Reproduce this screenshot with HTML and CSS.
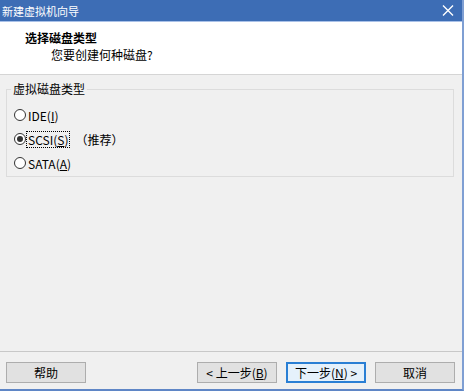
FILE: index.html
```html
<!doctype html>
<html lang="zh-CN">
  <head>
    <meta charset="UTF-8" />
    <title>新建虚拟机向导</title>
    <link rel="stylesheet" href="styles.css">
  </head>
  <body>
    <div class="window">
      <div class="titlebar">
        <span class="title">新建虚拟机向导</span>
        <svg class="close" width="12" height="11" viewBox="0 0 12 11">
          <path d="M1 0.5 L11 10.5 M11 0.5 L1 10.5" stroke="#fff" stroke-width="1.4" fill="none" />
        </svg>
      </div>

      <div class="header">
        <div class="header-title">选择磁盘类型</div>
        <div class="header-sub">您要创建何种磁盘?</div>
      </div>

      <div class="content">
        <fieldset class="group">
          <legend>虚拟磁盘类型</legend>
          <div class="radio-row">
            <span class="radio"></span>
            <span class="label">IDE(<u>I</u>)</span>
          </div>
          <div class="radio-row">
            <span class="radio checked"></span>
            <span class="label focused">SCSI(<u>S</u>)</span>
            <span class="hint">（推荐）</span>
          </div>
          <div class="radio-row">
            <span class="radio"></span>
            <span class="label">SATA(<u>A</u>)</span>
          </div>
        </fieldset>
      </div>

      <div class="footer">
        <button class="btn">帮助</button>
        <div class="spacer"></div>
        <button class="btn">&lt; 上一步(<u>B</u>)</button>
        <button class="btn default">下一步(<u>N</u>) &gt;</button>
        <button class="btn">取消</button>
      </div>
    </div>
  </body>
</html>
```

FILE: styles.css
```css
body {
  margin: 0;
  font-family: "Noto Sans CJK SC", "Noto Sans", sans-serif;
  font-size: 12px;
  color: #000;
  background-color: #f0f0f0;
}

.window {
  width: 462px;
  height: 389px;
  display: flex;
  flex-direction: column;
  background-color: #f0f0f0;
  border-right: 2px solid #7f9fd3;
  border-bottom: 2px solid #5f86c6;
}

.titlebar {
  height: 21px;
  flex-shrink: 0;
  display: flex;
  align-items: center;
  justify-content: space-between;
  padding: 0 8px 0 2px;
  background-color: #3d6db5;
  border-bottom: 1px solid #a9c1e8;
}

.title {
  color: #fff;
  font-size: 11px;
  line-height: 14px;
}

.close {
  display: block;
}

.header {
  height: 53px;
  flex-shrink: 0;
  box-sizing: border-box;
  padding: 8px 0 0 25px;
  background-color: #fff;
  border-bottom: 1px solid #d5d5d5;
}

.header-title {
  font-weight: bold;
  line-height: 16px;
}

.header-sub {
  line-height: 16px;
  margin-top: 1px;
  padding-left: 26px;
}

.content {
  flex: 1;
  padding: 7px 8px 0 6px;
}

.group {
  margin: 0;
  padding: 7px 0 1px 7px;
  border: 1px solid #dcdcdc;
}

.group legend {
  margin-left: -3px;
  padding: 0 2px;
  line-height: 14px;
}

.radio-row {
  height: 24px;
  display: flex;
  align-items: center;
}

.radio {
  width: 12px;
  height: 12px;
  box-sizing: border-box;
  border: 1px solid #333;
  border-radius: 50%;
  background-color: #fff;
  margin-right: 2px;
  display: flex;
  align-items: center;
  justify-content: center;
}

.radio.checked::after {
  content: "";
  width: 6px;
  height: 6px;
  border-radius: 50%;
  background-color: #333;
}

.label {
  line-height: 15px;
}

.label.focused {
  outline: 1px dotted #000;
  padding: 0 1px;
  margin-left: -1px;
}

.hint {
  margin-left: 6px;
  line-height: 15px;
}

.footer {
  height: 38px;
  flex-shrink: 0;
  box-sizing: border-box;
  display: flex;
  align-items: flex-start;
  gap: 9px;
  padding: 10px 7px 0 6px;
  border-top: 1px solid #c8c8c8;
}

.spacer {
  flex: 1;
}

.btn {
  width: 80px;
  height: 21px;
  box-sizing: border-box;
  padding: 0;
  font-family: "Noto Sans CJK SC", "Noto Sans", sans-serif;
  font-size: 12px;
  color: #000;
  background-color: #e1e1e1;
  border: 1px solid #adadad;
  line-height: 17px;
}

.btn.default {
  background-color: #e5f1fb;
  border: 2px solid #2a7fd4;
}
```
